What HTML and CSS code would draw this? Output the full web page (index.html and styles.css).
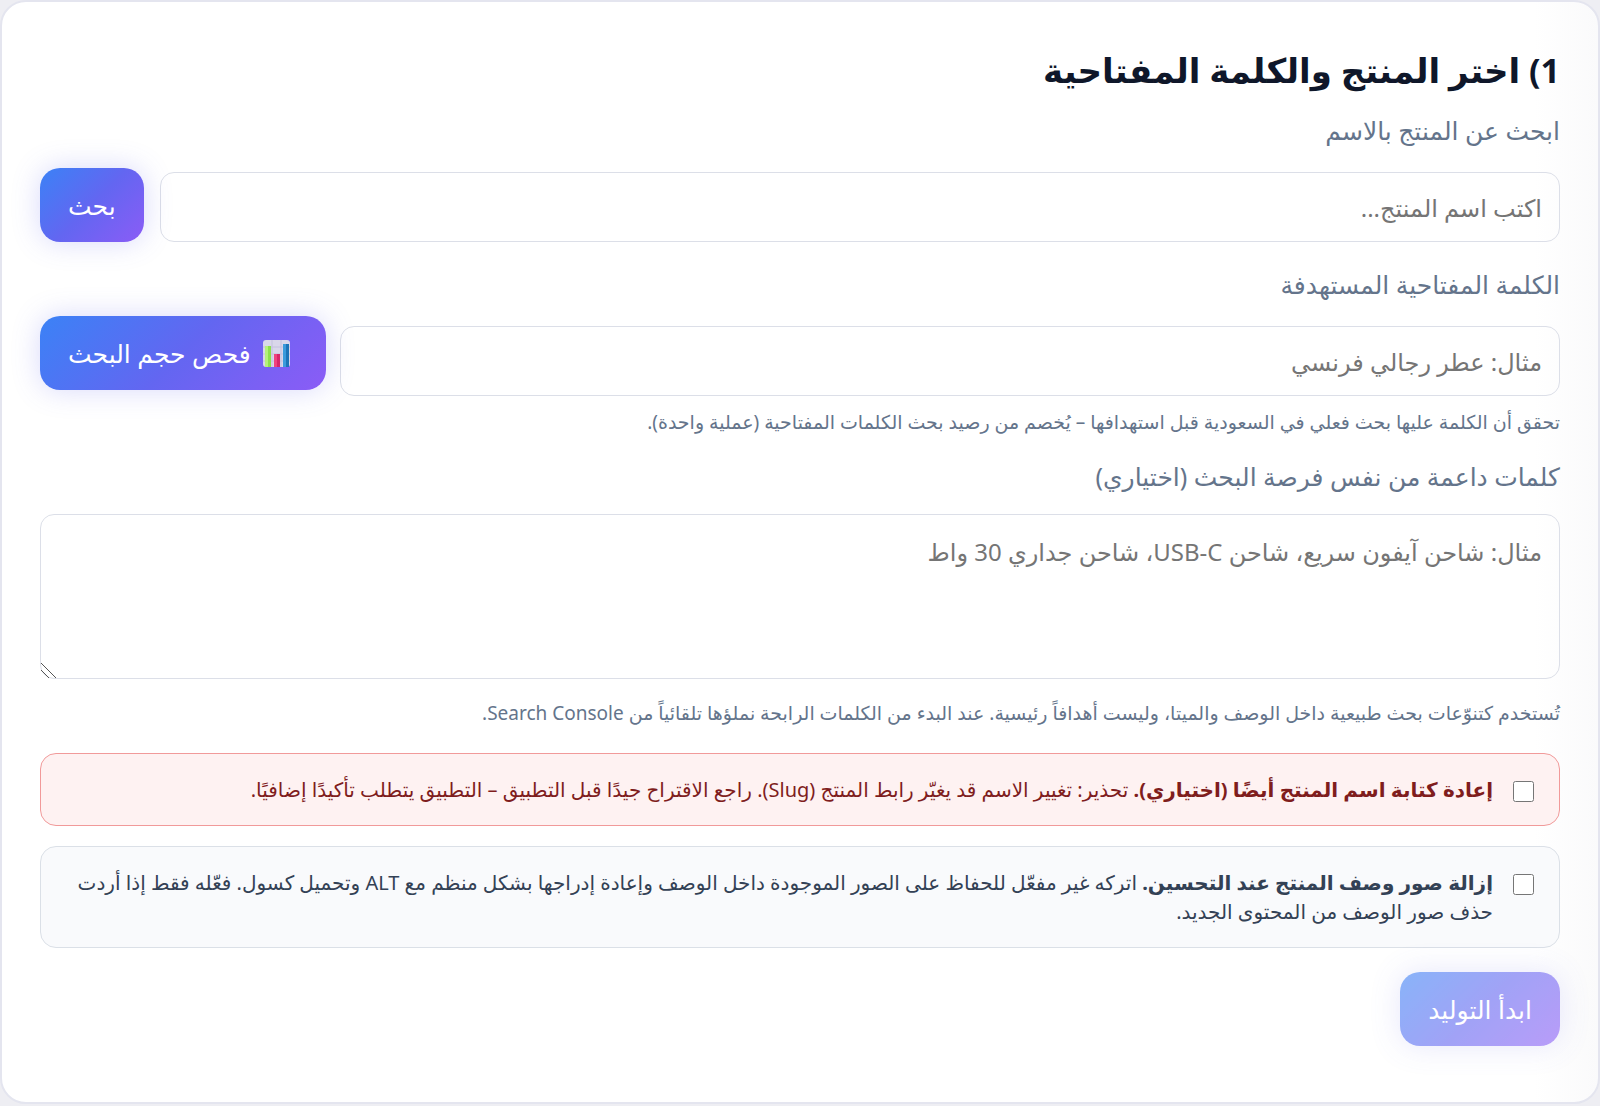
FILE: index.html
```html
<!DOCTYPE html>
<html lang="ar" dir="rtl">
<head>
<meta charset="utf-8">
<meta name="viewport" content="width=device-width, initial-scale=1">
<title>اختر المنتج والكلمة المفتاحية</title>
<link rel="stylesheet" href="styles.css">
</head>
<body>
<form class="card">
  <h2 class="title">1) اختر المنتج والكلمة المفتاحية</h2>

  <label class="label" for="product">ابحث عن المنتج بالاسم</label>
  <div class="row row-search">
    <input class="field" id="product" type="text" placeholder="اكتب اسم المنتج...">
    <button class="btn" type="button">بحث</button>
  </div>

  <label class="label" for="keyword">الكلمة المفتاحية المستهدفة</label>
  <div class="row row-keyword">
    <input class="field" id="keyword" type="text" placeholder="مثال: عطر رجالي فرنسي">
    <button class="btn btn-wide" type="button">
      <svg class="chart" viewBox="0 0 27 27" aria-hidden="true">
        <rect width="27" height="27" rx="3" fill="#d9d7ea"/>
        <path d="M0 7H27M0 14H27M0 21H27M9 0V27M18 0V27" stroke="#c4c1de" stroke-width="1"/>
        <rect x="2" y="6" width="6" height="21" fill="#8ee04e"/>
        <rect x="2" y="6" width="3" height="21" fill="#b4f07c"/>
        <rect x="11" y="14" width="6" height="13" fill="#d8246a"/>
        <rect x="11" y="14" width="3" height="13" fill="#f0427f"/>
        <rect x="20" y="4" width="6" height="23" fill="#1d74b8"/>
        <rect x="20" y="4" width="3" height="23" fill="#3b9bdc"/>
      </svg>
      <span>فحص حجم البحث</span>
    </button>
  </div>
  <p class="hint">تحقق أن الكلمة عليها بحث فعلي في السعودية قبل استهدافها – يُخصم من رصيد بحث الكلمات المفتاحية (عملية واحدة).</p>

  <label class="label" for="support">كلمات داعمة من نفس فرصة البحث (اختياري)</label>
  <textarea class="field area" id="support" placeholder="مثال: شاحن آيفون سريع، شاحن USB-C، شاحن جداري 30 واط"></textarea>
  <p class="hint hint-area">تُستخدم كتنوّعات بحث طبيعية داخل الوصف والميتا، وليست أهدافاً رئيسية. عند البدء من الكلمات الرابحة نملؤها تلقائياً من Search Console.</p>

  <label class="option option-danger">
    <input class="check" type="checkbox">
    <span><strong>إعادة كتابة اسم المنتج أيضًا (اختياري).</strong> تحذير: تغيير الاسم قد يغيّر رابط المنتج (Slug). راجع الاقتراح جيدًا قبل التطبيق – التطبيق يتطلب تأكيدًا إضافيًا.</span>
  </label>
  <label class="option">
    <input class="check" type="checkbox">
    <span><strong>إزالة صور وصف المنتج عند التحسين.</strong> اتركه غير مفعّل للحفاظ على الصور الموجودة داخل الوصف وإعادة إدراجها بشكل منظم مع ALT وتحميل كسول. فعّله فقط إذا أردت حذف صور الوصف من المحتوى الجديد.</span>
  </label>

  <button class="btn btn-start" type="button" disabled>ابدأ التوليد</button>
</form>
</body>
</html>
```
FILE: styles.css
```css
* {
  box-sizing: border-box;
}

body {
  margin: 0;
  background: #eeeef3;
  color: #0f172a;
  font-family: "Noto Sans", "DejaVu Sans", sans-serif;
  font-size: 24px;
}

.card {
  padding: 44px 38px 56px;
  border: 2px solid #e4e5ef;
  border-radius: 26px;
  background: linear-gradient(90deg, #fff 96%, #fafafb);
}

.title {
  margin: 0 0 16px;
  font-size: 34px;
  line-height: 48px;
  font-weight: 700;
}

.label {
  display: block;
  color: #64748b;
  font-size: 25px;
  line-height: 40px;
}

.row {
  display: flex;
}

.row-search {
  align-items: flex-end;
  gap: 16px;
  margin: 18px 0 22px;
}

.row-keyword {
  align-items: flex-start;
  gap: 14px;
  margin: 12px 0 10px;
}

.row-keyword .field {
  margin-top: 10px;
}

.field {
  flex: 1;
  min-width: 0;
  height: 70px;
  padding: 0 17px;
  border: 1px solid #dcdfe8;
  border-radius: 14px;
  background: transparent;
  color: inherit;
  font: inherit;
}

.field::placeholder {
  color: #757575;
}

.area {
  display: block;
  width: 100%;
  height: 165px;
  margin: 18px 0 18px;
  padding: 17px;
  line-height: 40px;
  resize: vertical;
}

.area::-webkit-resizer {
  background: linear-gradient(45deg, transparent 5px, #555 5px 6px, transparent 6px 10px, #555 10px 11px, transparent 11px);
}

.btn {
  height: 74px;
  padding: 0 28px;
  border: 0;
  border-radius: 20px;
  background: linear-gradient(135deg, #3b82f6, #6366f1 50%, #8b5cf6);
  box-shadow: 0 0 28px rgba(99, 102, 241, 0.25);
  color: #fff;
  font: inherit;
  font-size: 25px;
}

.btn-wide {
  display: flex;
  align-items: center;
  gap: 12px;
  padding-right: 36px;
}

.chart {
  width: 27px;
  height: 27px;
}

.btn-start {
  display: block;
  margin-top: 24px;
  opacity: 0.6;
}

.hint {
  margin: 0 0 18px;
  color: #64748b;
  font-size: 19px;
  line-height: 32px;
}

.hint-area {
  margin-bottom: 24px;
}

.option {
  display: flex;
  align-items: flex-start;
  gap: 20px;
  margin-top: 20px;
  padding: 21px 25px 21px 17px;
  border: 1px solid #dbe0e7;
  border-radius: 16px;
  background: #f9fafc;
  color: #334155;
  font-size: 20px;
  line-height: 29px;
}

.option-danger {
  border-color: #f19a9a;
  background: #fef2f2;
  color: #7f1d1d;
}

.check {
  flex: none;
  width: 21px;
  height: 21px;
  margin: 6px 0 0;
}
```
